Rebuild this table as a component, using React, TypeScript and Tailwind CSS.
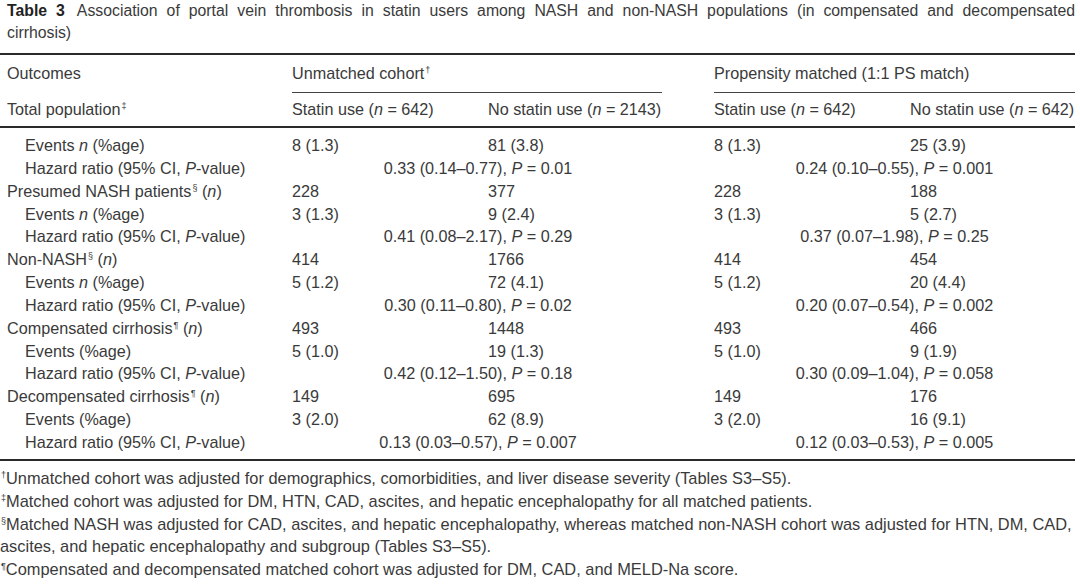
import React from 'react'

type Row =
  | { kind: 'data'; label: React.ReactNode; indent?: boolean; cells: string[] }
  | { kind: 'hr'; left: string; leftP: string; right: string; rightP: string }

const N = () => <i>n</i>
const Sup = ({ c }: { c: string }) => (
  <sup className="text-[9px] relative -top-[6px] ml-[1px]">{c}</sup>
)

const hazardLabel = (
  <>
    Hazard ratio (95% CI, <i>P</i>-value)
  </>
)

const rows: Row[] = [
  { kind: 'data', indent: true, label: <>Events <N /> (%age)</>, cells: ['8 (1.3)', '81 (3.8)', '8 (1.3)', '25 (3.9)'] },
  { kind: 'hr', left: '0.33 (0.14–0.77), ', leftP: '0.01', right: '0.24 (0.10–0.55), ', rightP: '0.001' },
  { kind: 'data', label: <>Presumed NASH patients<Sup c="§" /> (<N />)</>, cells: ['228', '377', '228', '188'] },
  { kind: 'data', indent: true, label: <>Events <N /> (%age)</>, cells: ['3 (1.3)', '9 (2.4)', '3 (1.3)', '5 (2.7)'] },
  { kind: 'hr', left: '0.41 (0.08–2.17), ', leftP: '0.29', right: '0.37 (0.07–1.98), ', rightP: '0.25' },
  { kind: 'data', label: <>Non-NASH<Sup c="§" /> (<N />)</>, cells: ['414', '1766', '414', '454'] },
  { kind: 'data', indent: true, label: <>Events <N /> (%age)</>, cells: ['5 (1.2)', '72 (4.1)', '5 (1.2)', '20 (4.4)'] },
  { kind: 'hr', left: '0.30 (0.11–0.80), ', leftP: '0.02', right: '0.20 (0.07–0.54), ', rightP: '0.002' },
  { kind: 'data', label: <>Compensated cirrhosis<Sup c="¶" /> (<N />)</>, cells: ['493', '1448', '493', '466'] },
  { kind: 'data', indent: true, label: <>Events (%age)</>, cells: ['5 (1.0)', '19 (1.3)', '5 (1.0)', '9 (1.9)'] },
  { kind: 'hr', left: '0.42 (0.12–1.50), ', leftP: '0.18', right: '0.30 (0.09–1.04), ', rightP: '0.058' },
  { kind: 'data', label: <>Decompensated cirrhosis<Sup c="¶" /> (<N />)</>, cells: ['149', '695', '149', '176'] },
  { kind: 'data', indent: true, label: <>Events (%age)</>, cells: ['3 (2.0)', '62 (8.9)', '3 (2.0)', '16 (9.1)'] },
  { kind: 'hr', left: '0.13 (0.03–0.57), ', leftP: '0.007', right: '0.12 (0.03–0.53), ', rightP: '0.005' },
]

const grid = 'grid grid-cols-[292px_196px_226px_196px_165px]'

function DataRow({ row }: { row: Row }) {
  if (row.kind === 'hr') {
    return (
      <div className={`${grid} h-[22.85px] items-center`}>
        <div className="pl-[25px]">{hazardLabel}</div>
        <div className="col-span-2 pr-[50px] text-center">
          {row.left}
          <i>P</i> = {row.leftP}
        </div>
        <div className="col-span-2 text-center">
          {row.right}
          <i>P</i> = {row.rightP}
        </div>
      </div>
    )
  }
  return (
    <div className={`${grid} h-[22.85px] items-center`}>
      <div className={row.indent ? 'pl-[25px]' : 'pl-[7px]'}>{row.label}</div>
      {row.cells.map((c, i) => (
        <div key={i}>{c}</div>
      ))}
    </div>
  )
}

export default function App() {
  return (
    <div
      className="w-[1080px] h-[584px] bg-white text-[#3a3a3a] text-[16.2px] overflow-hidden"
      style={{ fontFamily: '"Liberation Sans", Arial, sans-serif' }}
    >
      {/* Caption */}
      <div className="pl-[7px] pr-[5px] leading-[22px] text-[15.8px]">
        <p className="text-justify [text-align-last:justify]">
          <b className="text-[#222]">Table 3</b>
          <span className="ml-[12px]">
            Association of portal vein thrombosis in statin users among NASH and non-NASH populations (in
            compensated and decompensated
          </span>
        </p>
        <p>cirrhosis)</p>
      </div>

      <div className="w-[1075px] mt-[9px]">
        {/* Header */}
        <div className="border-t-2 border-[#2a2a2a]">
          <div className={`${grid} h-[37px] items-center`}>
            <div className="pl-[7px]">Outcomes</div>
            <div className="col-span-2">
              Unmatched cohort<Sup c="†" />
            </div>
            <div className="col-span-2">Propensity matched (1:1 PS match)</div>
          </div>
          <div className={grid}>
            <div />
            <div className="col-span-2 mr-[52px] border-t border-[#444]" />
            <div className="col-span-2 border-t border-[#444]" />
          </div>
          <div className={`${grid} h-[33px] items-center`}>
            <div className="pl-[7px]">
              Total population<Sup c="‡" />
            </div>
            <div>
              Statin use (<N /> = 642)
            </div>
            <div>
              No statin use (<N /> = 2143)
            </div>
            <div>
              Statin use (<N /> = 642)
            </div>
            <div>
              No statin use (<N /> = 642)
            </div>
          </div>
        </div>

        {/* Body */}
        <div className="border-t-2 border-b-2 border-[#2a2a2a] pt-[5px] pb-[6px]">
          {rows.map((r, i) => (
            <DataRow key={i} row={r} />
          ))}
        </div>

        {/* Footnotes */}
        <div className="pt-[6px] leading-[22.85px] text-[16.4px]">
          <p>
            <Sup c="†" />
            Unmatched cohort was adjusted for demographics, comorbidities, and liver disease severity (Tables S3–S5).
          </p>
          <p>
            <Sup c="‡" />
            Matched cohort was adjusted for DM, HTN, CAD, ascites, and hepatic encephalopathy for all matched patients.
          </p>
          <p>
            <span className="whitespace-nowrap">
              <Sup c="§" />
              Matched NASH was adjusted for CAD, ascites, and hepatic encephalopathy, whereas matched non-NASH cohort was
              adjusted for HTN, DM, CAD,
            </span>
            <br />
            ascites, and hepatic encephalopathy and subgroup (Tables S3–S5).
          </p>
          <p>
            <Sup c="¶" />
            Compensated and decompensated matched cohort was adjusted for DM, CAD, and MELD-Na score.
          </p>
        </div>
      </div>
    </div>
  )
}
